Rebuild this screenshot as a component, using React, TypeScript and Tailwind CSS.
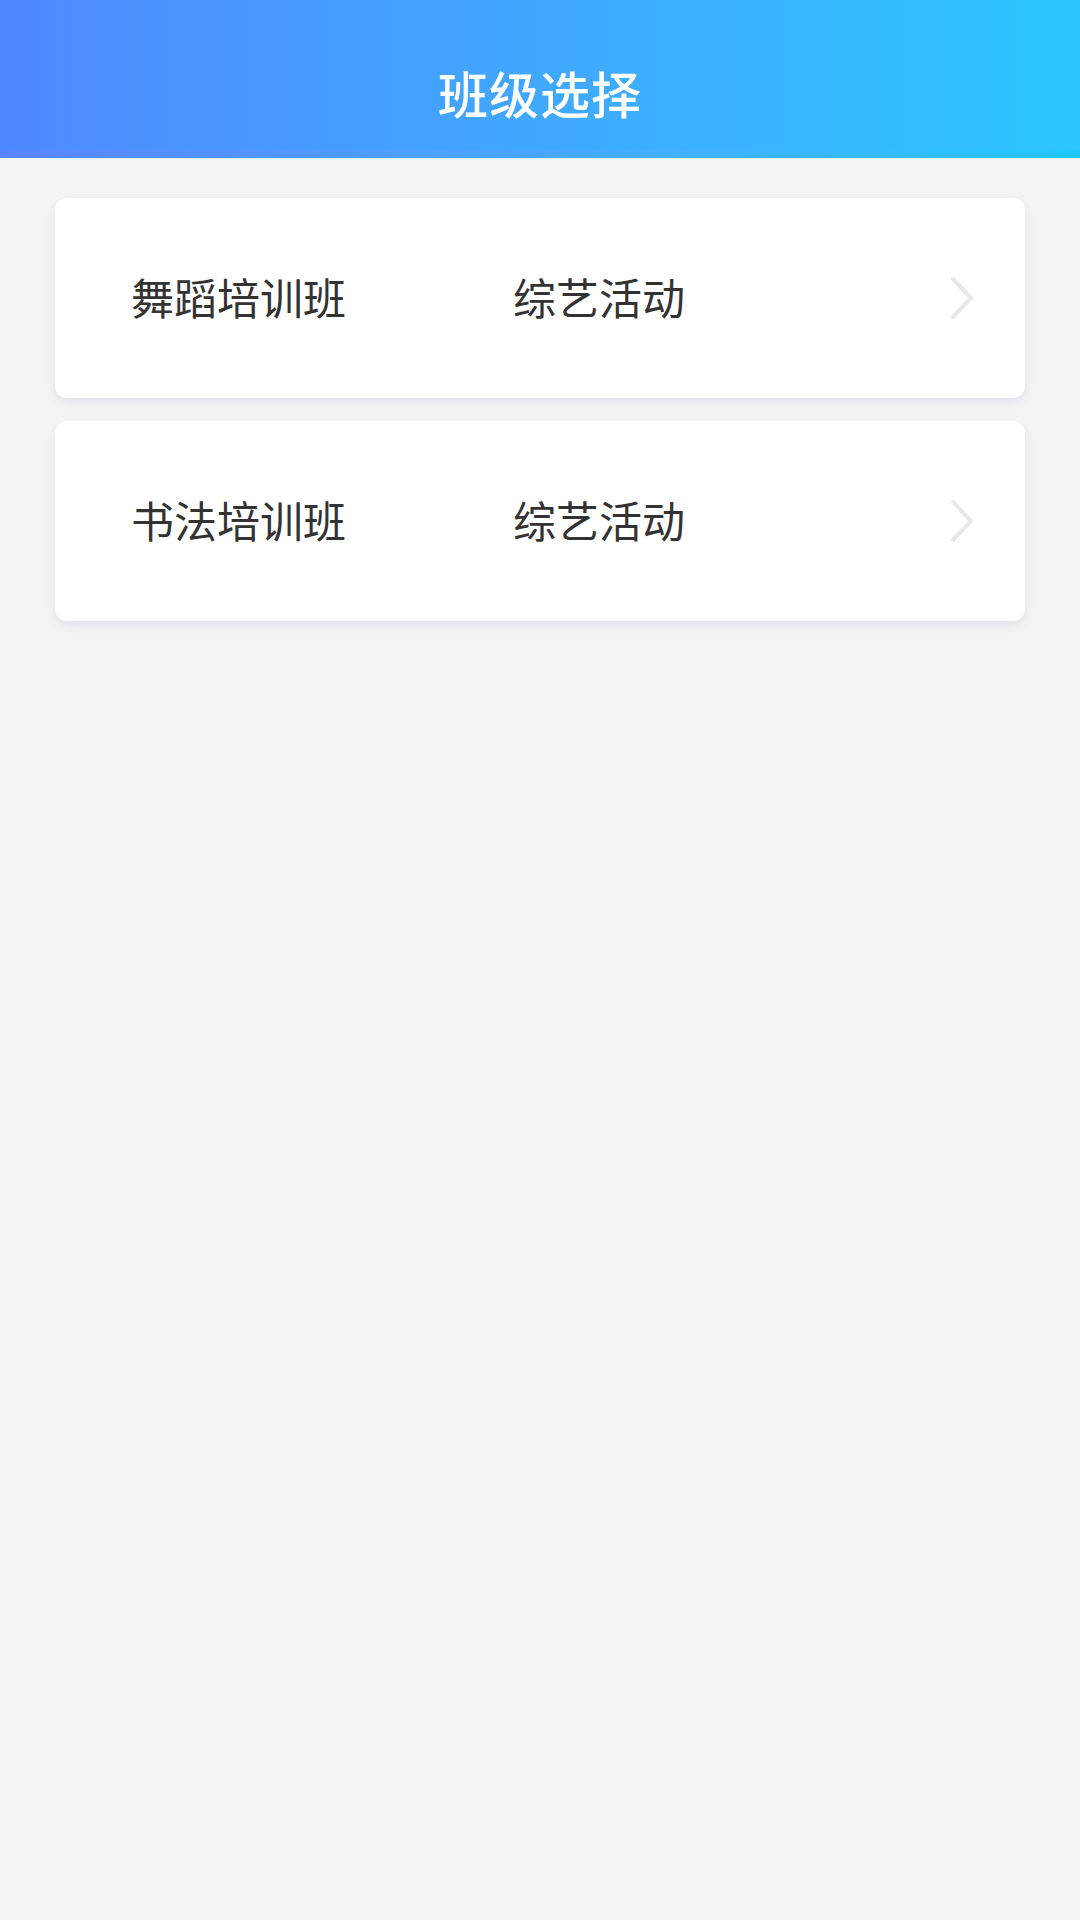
import React from "react";

type ClassItem = {
  id: number;
  name: string;
  category: string;
};

const classes: ClassItem[] = [
  { id: 1, name: "舞蹈培训班", category: "综艺活动" },
  { id: 2, name: "书法培训班", category: "综艺活动" },
];

const font = "font-['Noto_Sans_CJK_SC','Noto_Sans',sans-serif]";

function Chevron() {
  return (
    <svg width="26" height="44" viewBox="0 0 26 44" fill="none">
      <path
        d="M4 3 L22 22 L4 41"
        stroke="#e8e8ec"
        strokeWidth="4"
        strokeLinecap="round"
        strokeLinejoin="round"
      />
    </svg>
  );
}

export default function App() {
  return (
    <div className={`min-h-[1920px] w-[1080px] bg-[#f4f4f4] ${font}`}>
      {/* Header */}
      <div className="relative h-[158px] pt-[26px] bg-gradient-to-r from-[#4f88ff] via-[#40a8ff] to-[#2bc5ff] flex items-center justify-center">
        <h1 className="text-[50px] font-medium text-white tracking-[1px] leading-none">
          班级选择
        </h1>
        <div className="absolute bottom-0 left-0 right-0 h-[8px] bg-gradient-to-r from-[#5a84ff] to-[#1fc8ff] opacity-80" />
      </div>

      {/* Class list */}
      <div className="px-[55px] pt-[40px] flex flex-col gap-[23px]">
        {classes.map((item) => (
          <div
            key={item.id}
            className="h-[200px] bg-white rounded-[12px] shadow-[0_4px_8px_rgba(200,205,220,0.45)] flex items-center pl-[76px] pr-[50px]"
          >
            <span className="w-[382px] text-[43px] text-[#333333] leading-none -mt-[3px]">
              {item.name}
            </span>
            <span className="flex-1 text-[43px] text-[#333333] leading-none -mt-[3px]">
              {item.category}
            </span>
            <Chevron />
          </div>
        ))}
      </div>
    </div>
  );
}
